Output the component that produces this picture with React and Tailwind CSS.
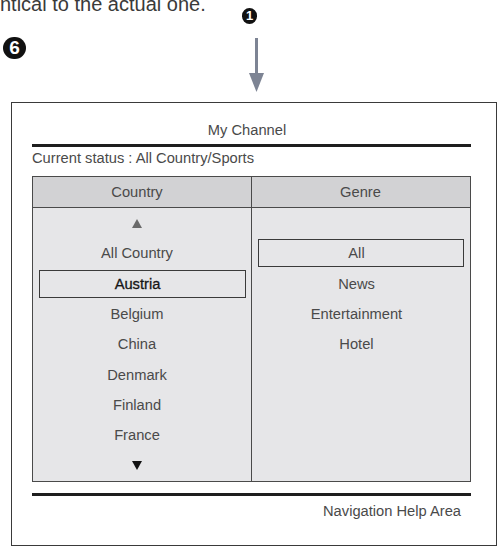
export default function App() {
  const country = ["All Country", "Austria", "Belgium", "China", "Denmark", "Finland", "France"];
  const genre = ["", "All", "News", "Entertainment", "Hotel", "", "", "", ""];
  return (
    <div className="w-[498px] h-[546px] bg-white overflow-hidden relative font-['Liberation_Sans',Arial,sans-serif] text-[#4a4a4a]">
      <div className="h-[102px] relative">
        <div className="absolute left-0 top-[-6px] text-[20px] leading-[20px] text-[#3a3a3a] whitespace-nowrap">ntical to the actual one.</div>
        <div className="absolute left-[242px] top-[8px] w-[15px] h-[16px] rounded-full bg-[#111] text-white text-[13px] leading-[16px] font-bold text-center">1</div>
        <div className="absolute left-[3px] top-[37px] w-[23px] h-[22px] rounded-full bg-[#111] text-white text-[19px] leading-[22px] font-bold text-center">6</div>
        <svg className="absolute left-[249px] top-[38px]" width="15" height="54" viewBox="0 0 15 54">
          <rect x="6" y="0" width="3" height="37" fill="#7d8494" />
          <polygon points="0,35 15,35 7.5,54" fill="#7d8494" />
        </svg>
      </div>
      <div className="ml-[11px] w-[486px] h-[444px] border border-[#3a3a3a] pl-[20px] pr-[25px]">
        <div className="pt-[17px] pb-[4px] text-[14.7px] leading-[20px] text-center pr-[9px]">My Channel</div>
        <div className="h-[3px] bg-[#1e1e1e]" />
        <div className="mt-[1px] text-[14.7px] leading-[20px]">Current status : All Country/Sports</div>
        <div className="mt-[8px] flex border border-[#4a4a4a] text-[14.7px]">
          <div className="w-[219px] border-r border-[#4a4a4a] flex flex-col">
            <div className="h-[31px] bg-[#d2d2d4] border-b border-[#4a4a4a] flex items-center justify-center pr-[10px]">Country</div>
            <div className="h-[273px] bg-[#e6e6e8] flex flex-col">
              <div className="flex-1 flex items-center justify-center pr-[10px]">
                <svg width="10" height="9" viewBox="0 0 10 9"><polygon points="5,0 10,9 0,9" fill="#6a6a6a" /></svg>
              </div>
              {country.map((c) => (
                <div key={c} className="flex-1 flex items-center justify-center">
                  {c === "Austria" ? (
                    <div className="ml-[6px] mr-[5px] w-full h-[28px] border-[1.5px] border-[#3a3a3a] flex items-center justify-center pr-[10px] text-[#151515] [-webkit-text-stroke:0.3px_#151515]">{c}</div>
                  ) : (
                    <span className="pr-[10px]">{c}</span>
                  )}
                </div>
              ))}
              <div className="flex-1 flex items-center justify-center pr-[10px]">
                <svg width="10" height="9" viewBox="0 0 10 9"><polygon points="0,0 10,0 5,9" fill="#111" /></svg>
              </div>
            </div>
          </div>
          <div className="flex-1 flex flex-col">
            <div className="h-[31px] bg-[#d2d2d4] border-b border-[#4a4a4a] flex items-center justify-center pr-[1px]">Genre</div>
            <div className="h-[273px] bg-[#e6e6e8] flex flex-col">
              {genre.map((g, i) => (
                <div key={i} className="flex-1 flex items-center justify-center">
                  {g === "All" ? (
                    <div className="mx-[6px] w-full h-[28px] border-[1.5px] border-[#3a3a3a] flex items-center justify-center pr-[9px]">{g}</div>
                  ) : (
                    <span className="pr-[9px]">{g}</span>
                  )}
                </div>
              ))}
            </div>
          </div>
        </div>
        <div className="mt-[11px] h-[3px] bg-[#1e1e1e]" />
        <div className="mt-[5px] text-[14.7px] leading-[20px] text-right pr-[10px]">Navigation Help Area</div>
      </div>
    </div>
  );
}
